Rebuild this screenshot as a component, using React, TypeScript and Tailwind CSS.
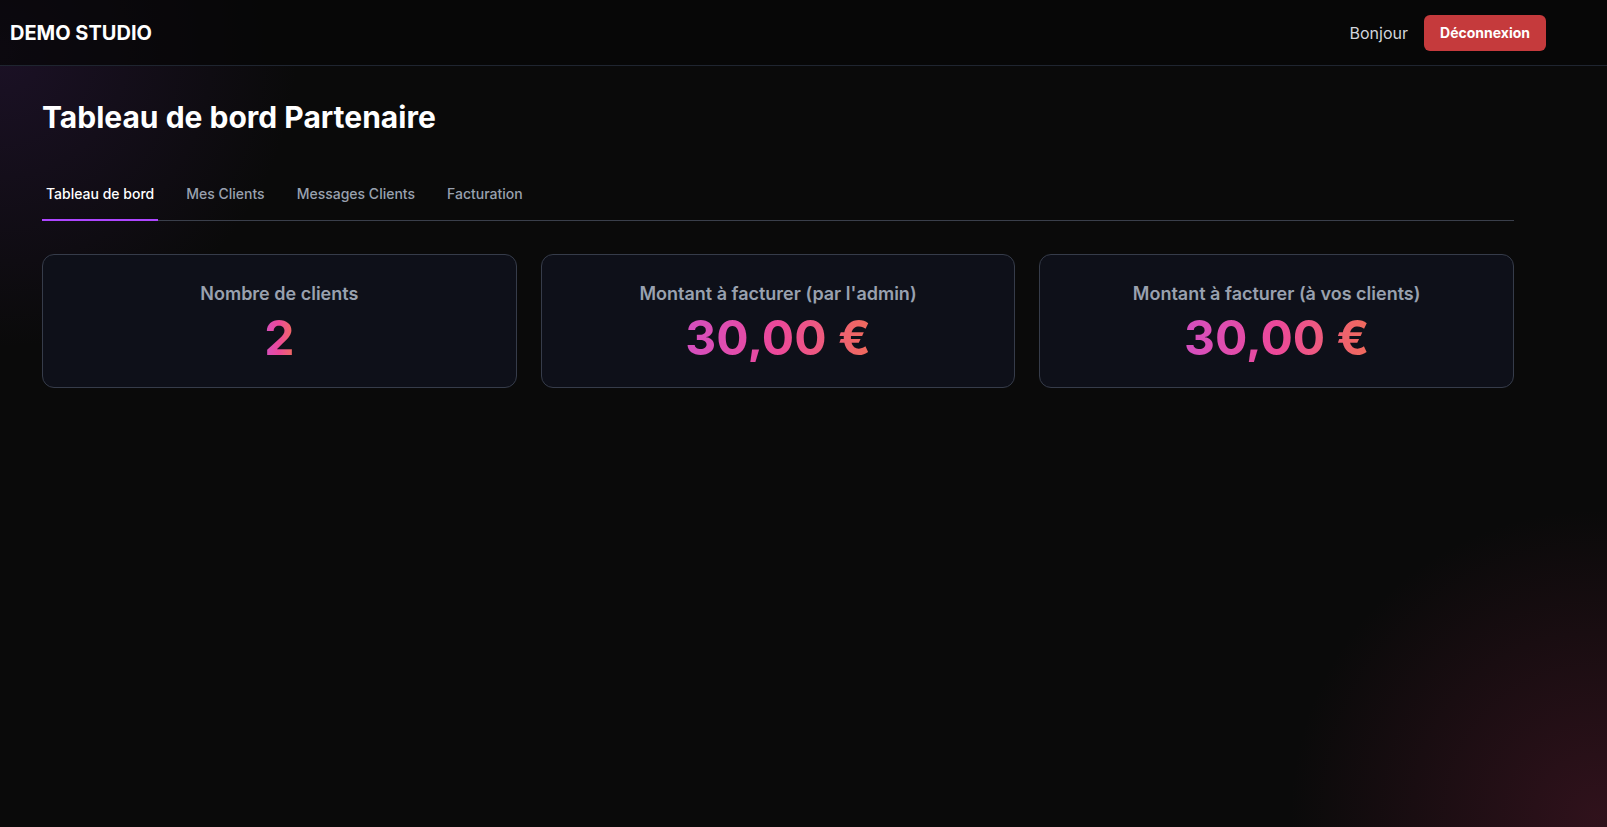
import React from 'react';

const tabs = ['Tableau de bord', 'Mes Clients', 'Messages Clients', 'Facturation'];

const stats = [
  { label: 'Nombre de clients', value: '2' },
  { label: "Montant à facturer (par l'admin)", value: '30,00 €' },
  { label: 'Montant à facturer (à vos clients)', value: '30,00 €' },
];

const App: React.FC = () => {
  return (
    <div
      className="min-h-screen w-full bg-[#0a0a0a] text-white relative overflow-hidden"
      style={{ fontFamily: 'Inter, "Noto Sans", sans-serif' }}
    >
      {/* background glows */}
      <div className="pointer-events-none absolute -left-[300px] -top-[250px] h-[600px] w-[600px] rounded-full bg-[radial-gradient(circle,rgba(60,30,90,0.35)_0%,rgba(10,10,10,0)_70%)]" />
      <div className="pointer-events-none absolute -right-[300px] -bottom-[300px] h-[620px] w-[620px] rounded-full bg-[radial-gradient(circle,rgba(85,25,45,0.5)_0%,rgba(10,10,10,0)_70%)]" />

      <header className="relative flex h-[66px] items-center justify-between border-b border-[#1f2530] bg-[#060606]/70 pl-[10px] pr-[61px]">
        <div className="text-xl font-bold">DEMO STUDIO</div>
        <div className="flex items-center gap-4">
          <span className="text-base text-gray-300">Bonjour</span>
          <button className="h-9 rounded-md bg-[#c53a3c] px-4 text-sm font-bold text-white">
            Déconnexion
          </button>
        </div>
      </header>

      <main className="relative ml-[42px] w-[1472px] pt-[33px]">
        <h1 className="text-3xl font-bold">Tableau de bord Partenaire</h1>

        <nav className="mt-[49px] flex gap-6 border-b border-[#3a3f4b]">
          {tabs.map((t, i) => (
            <button
              key={t}
              className={
                i === 0
                  ? '-mb-px border-b-2 border-purple-500 px-1 pb-[15px] text-sm font-medium text-white'
                  : '-mb-px border-b-2 border-transparent px-1 pb-[15px] text-sm font-medium text-gray-400'
              }
            >
              {t}
            </button>
          ))}
        </nav>

        <div className="mt-[33px] grid grid-cols-3 gap-6">
          {stats.map((s) => (
            <div
              key={s.label}
              className="flex h-[134px] flex-col items-center justify-center rounded-xl border border-[#363c4a] bg-[#0e1019]"
            >
              <div className="text-lg font-semibold text-gray-400">{s.label}</div>
              <div className="mt-[6px] bg-gradient-to-r from-[#d44fc0] via-[#ec4899] to-[#f06a5a] bg-clip-text text-5xl font-bold text-transparent">
                {s.value}
              </div>
            </div>
          ))}
        </div>
      </main>
    </div>
  );
};

export default App;
